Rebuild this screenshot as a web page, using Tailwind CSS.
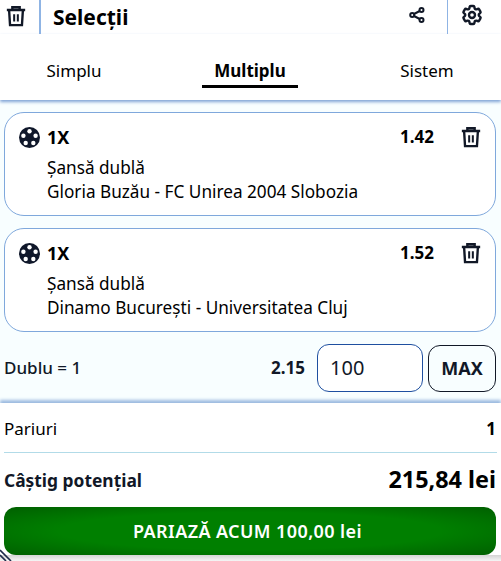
<!doctype html>
<html lang="en">
  <head>
    <meta charset="UTF-8" />
    <meta name="viewport" content="width=device-width, initial-scale=1.0" />
    <title>Selecții</title>
    <script src="https://cdn.jsdelivr.net/npm/@tailwindcss/browser@4"></script>
  </head>

  <body class="relative w-[501px] h-[561px] overflow-hidden bg-white font-['Noto_Sans',sans-serif] text-black">
    <!-- Header -->
    <header class="flex items-center h-[34px]">
      <button class="w-[41px] h-[34px] flex items-center justify-start pl-[5px] border-r-2 border-[#8fb4e4]">
        <svg class="w-[22px] h-[22px] -mt-[2px]" viewBox="0 0 24 24" fill="none" stroke="#111827" stroke-width="2.6">
          <path d="M2 5.5h20M8 5V2.5h8V5M4.5 6l1 16h13l1-16" />
          <path d="M10 10v8M14 10v8" stroke-width="2.2" />
        </svg>
      </button>
      <h1 class="ml-[12px] text-[21px] font-bold leading-none flex-1">Selecții</h1>
      <button class="w-[28px] h-[34px] flex items-center justify-center mr-[16px]">
        <svg class="w-[16px] h-[16px] -mt-[4px]" viewBox="0 0 16 16" fill="none" stroke="#111827" stroke-width="2">
          <circle cx="3.2" cy="8" r="2" />
          <circle cx="12.5" cy="3" r="2" />
          <circle cx="12.5" cy="13" r="2" />
          <path d="M5 7l5.7-3M5 9l5.7 3" />
        </svg>
      </button>
      <button class="w-[54px] h-[34px] flex items-center justify-start pl-[12px] border-l border-[#8fb4e4]">
        <svg class="w-[24px] h-[24px] -mt-[4px]" viewBox="0 0 24 24" fill="none" stroke="#111827" stroke-width="2.4" stroke-linejoin="round">
          <path d="M9.594 3.94c.09-.542.56-.94 1.11-.94h2.593c.55 0 1.02.398 1.11.94l.213 1.281c.063.374.313.686.645.87.074.04.147.083.22.127.325.196.72.257 1.075.124l1.217-.456a1.125 1.125 0 0 1 1.37.49l1.296 2.247a1.125 1.125 0 0 1-.26 1.431l-1.003.827c-.293.241-.438.613-.43.992a7.723 7.723 0 0 1 0 .255c-.008.378.137.75.43.991l1.004.827c.424.35.534.955.26 1.43l-1.298 2.247a1.125 1.125 0 0 1-1.369.491l-1.217-.456c-.355-.133-.75-.072-1.076.124a6.47 6.47 0 0 1-.22.128c-.331.183-.581.495-.644.869l-.213 1.281c-.09.543-.56.94-1.11.94h-2.594c-.55 0-1.019-.398-1.11-.94l-.213-1.281c-.062-.374-.312-.686-.644-.87a6.52 6.52 0 0 1-.22-.127c-.325-.196-.72-.257-1.076-.124l-1.217.456a1.125 1.125 0 0 1-1.369-.49l-1.297-2.247a1.125 1.125 0 0 1 .26-1.431l1.004-.827c.292-.24.437-.613.43-.991a6.932 6.932 0 0 1 0-.255c.007-.38-.138-.751-.43-.992l-1.004-.827a1.125 1.125 0 0 1-.26-1.43l1.297-2.247a1.125 1.125 0 0 1 1.37-.491l1.216.456c.356.133.751.072 1.076-.124.072-.044.146-.086.22-.128.332-.183.582-.495.644-.869l.214-1.28Z" />
          <circle cx="12" cy="12" r="3" />
        </svg>
      </button>
    </header>

    <!-- Tabs -->
    <nav class="grid grid-cols-3 h-[66px] shadow-[0_2px_3px_#7fa3d6] relative text-[17px] leading-[24px]">
      <a class="flex justify-center items-start pt-[25px] pr-[19px]">Simplu</a>
      <a class="flex justify-center items-start pt-[25px] pr-[1px] font-bold relative">
        Multiplu
        <span class="absolute left-[35px] top-[51px] w-[96px] h-[3px] bg-black"></span>
      </a>
      <a class="flex justify-center items-start pt-[25px] pl-[19px]">Sistem</a>
    </nav>

    <!-- Bets -->
    <main class="bg-[#f8feff] h-[303px] pl-[4px] pr-[5px] pt-[12px] flex flex-col">
      <article class="h-[104px] bg-white border border-[#7fa8dc] rounded-[20px] pl-[14px] pr-[13px] pt-[12px] mb-[12px]">
        <div class="flex items-center h-[24px]">
          <svg class="w-[21px] h-[21px]" viewBox="0 0 22 22">
            <circle cx="11" cy="11" r="11" fill="#0f172a" />
            <circle cx="11" cy="4.4" r="2.3" fill="#fff" />
            <circle cx="4.6" cy="9.2" r="2.3" fill="#fff" />
            <circle cx="17.4" cy="9.2" r="2.3" fill="#fff" />
            <circle cx="7" cy="16.8" r="2.3" fill="#fff" />
            <circle cx="15" cy="16.8" r="2.3" fill="#fff" />
          </svg>
          <span class="ml-[7px] text-[18px] font-bold flex-1">1X</span>
          <span class="text-[17px] font-bold mr-[26px]">1.42</span>
          <svg class="w-[22px] h-[22px]" viewBox="0 0 24 24" fill="none" stroke="#111827" stroke-width="2.6">
            <path d="M2 5.5h20M8 5V2.5h8V5M4.5 6l1 16h13l1-16" />
            <path d="M10 10v8M14 10v8" stroke-width="2.2" />
          </svg>
        </div>
        <p class="ml-[28px] mt-[7px] text-[17.2px] leading-[24px]">Șansă dublă</p>
        <p class="ml-[28px] text-[17.2px] leading-[24px]">Gloria Buzău - FC Unirea 2004 Slobozia</p>
      </article>

      <article class="h-[104px] bg-white border border-[#7fa8dc] rounded-[20px] pl-[14px] pr-[13px] pt-[12px]">
        <div class="flex items-center h-[24px]">
          <svg class="w-[21px] h-[21px]" viewBox="0 0 22 22">
            <circle cx="11" cy="11" r="11" fill="#0f172a" />
            <circle cx="11" cy="4.4" r="2.3" fill="#fff" />
            <circle cx="4.6" cy="9.2" r="2.3" fill="#fff" />
            <circle cx="17.4" cy="9.2" r="2.3" fill="#fff" />
            <circle cx="7" cy="16.8" r="2.3" fill="#fff" />
            <circle cx="15" cy="16.8" r="2.3" fill="#fff" />
          </svg>
          <span class="ml-[7px] text-[18px] font-bold flex-1">1X</span>
          <span class="text-[17px] font-bold mr-[26px]">1.52</span>
          <svg class="w-[22px] h-[22px]" viewBox="0 0 24 24" fill="none" stroke="#111827" stroke-width="2.6">
            <path d="M2 5.5h20M8 5V2.5h8V5M4.5 6l1 16h13l1-16" />
            <path d="M10 10v8M14 10v8" stroke-width="2.2" />
          </svg>
        </div>
        <p class="ml-[28px] mt-[7px] text-[17.2px] leading-[24px]">Șansă dublă</p>
        <p class="ml-[28px] text-[17.2px] leading-[24px]">Dinamo București - Universitatea Cluj</p>
      </article>

      <!-- Stake -->
      <div class="flex items-center mt-[12px] h-[48px]">
        <span class="text-[17px] font-medium flex-1 text-[#111827]">Dublu = 1</span>
        <span class="text-[17px] font-bold text-[#111827] mr-[12px]">2.15</span>
        <div class="w-[106px] h-[48px] bg-white border border-[#1e4fa0] rounded-[12px] flex items-center pl-[12px] text-[20px] text-[#111827]">100</div>
        <button class="w-[68px] h-[47px] ml-[5px] border border-[#111827] rounded-[12px] text-[18px] font-bold text-[#111827]">MAX</button>
      </div>
    </main>

    <!-- Summary -->
    <section class="relative shadow-[0_-3px_3px_#9dbbe0] bg-white px-[4px] h-[158px]">
      <div class="flex justify-between items-center h-[50px] pt-[2px] border-b border-[#b2dbe8] text-[17px]">
        <span>Pariuri</span>
        <span class="font-bold mr-px">1</span>
      </div>
      <div class="flex justify-between items-center h-[54px] mr-px">
        <span class="text-[17.4px] font-bold text-[#111827]">Câștig potențial</span>
        <span class="text-[23.4px] font-bold">215,84 lei</span>
      </div>
      <button class="relative z-10 block w-[492px] h-[48px] pr-[5px] rounded-[12px] bg-[radial-gradient(ellipse_at_center,#007f00_55%,#005f00_100%)] text-white text-[18px] tracking-[0.4px] font-semibold">PARIAZĂ ACUM 100,00 lei</button>
      <div class="-mx-[4px] h-[6px] bg-gradient-to-b from-[#d4d4d4] to-[#f5f5f5]"></div>
      <!-- corner stripes peeking out under the button -->
      <svg class="absolute left-0 bottom-0 w-[12px] h-[12px]" viewBox="0 0 12 12" fill="none" stroke="#1e2a4a" stroke-width="1.6">
        <path d="M0 1l11 11M0 6l6 6" />
      </svg>
    </section>
  </body>
</html>
